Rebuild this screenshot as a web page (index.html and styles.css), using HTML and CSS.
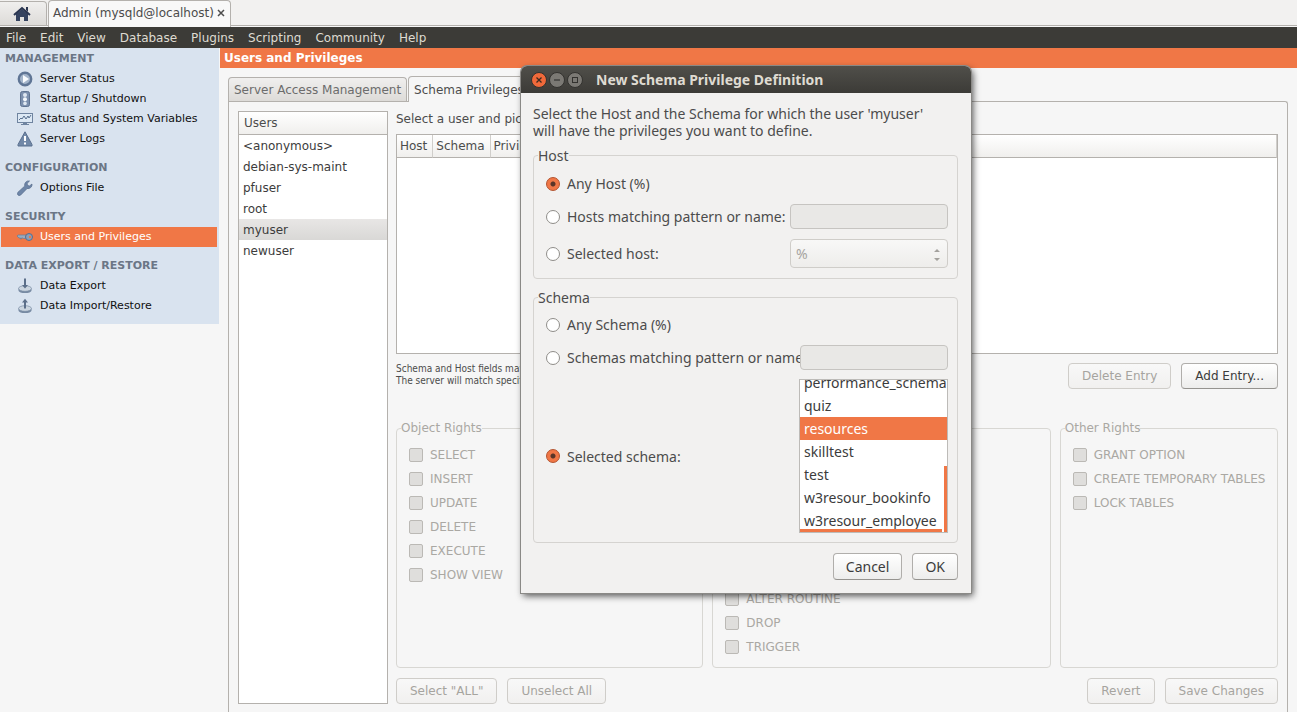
FILE: index.html
```html
<!DOCTYPE html>
<html lang="en">
<head>
<meta charset="utf-8">
<title>Admin (mysqld@localhost)</title>
<link rel="stylesheet" href="styles.css">
</head>
<body>
<div class="app">
  <div class="topbar">
    <button class="home" type="button" aria-label="Home">
      <svg width="18" height="16" viewBox="0 0 18 16"><path d="M3 8v7h4v-4h4v4h4V8L9 3z" fill="#34425f"/><path d="M1 9l8-7 8 7" fill="none" stroke="#2a3550" stroke-width="2"/><path d="M13 1h2v5l-2-2z" fill="#2a3550"/></svg>
    </button>
    <div class="doctab"><span>Admin (mysqld@localhost)</span><button type="button" class="close" aria-label="Close tab"><svg width="10" height="10" viewBox="0 0 10 10"><path d="M2 2l6 6M8 2L2 8" stroke="#4c4c4c" stroke-width="1.5"/></svg></button></div>
  </div>
  <nav class="menu">
    <button type="button">File</button><button type="button">Edit</button><button type="button">View</button><button type="button">Database</button><button type="button">Plugins</button><button type="button">Scripting</button><button type="button">Community</button><button type="button">Help</button>
  </nav>
  <div class="main">
    <aside class="side">
      <h2>MANAGEMENT</h2>
      <a href="#"><svg width="16" height="16" viewBox="0 0 16 16"><circle cx="8" cy="8" r="6.200" fill="#a3b4ca" stroke="#5f7595" stroke-width="2.400"/><path d="M6 4l6 4-6 4z" fill="#f8fbfe"/></svg>Server Status</a>
      <a href="#"><svg width="16" height="16" viewBox="0 0 16 16"><rect x="3.500" y=".5" width="9" height="15" rx="2" fill="#7c90ae" stroke="#5f7391"/><circle cx="8" cy="4" r="2" fill="#dfe8f1"/><circle cx="8" cy="8.200" r="2" fill="#f4f8fc"/><circle cx="8" cy="12.400" r="1.800" fill="#dfe8f1"/></svg>Startup / Shutdown</a>
      <a href="#"><svg width="16" height="16" viewBox="0 0 16 16"><rect x=".5" y="2.500" width="15" height="9" fill="#dce8f4" stroke="#6f84a0"/><path d="M2 9l2-2 1 1 2-3 2 3 2-3 1 2 2-3" fill="none" stroke="#58708f"/><path d="M6 12h4v1h2v1H4v-1h2z" fill="#6f84a0"/></svg>Status and System Variables</a>
      <a href="#"><svg width="16" height="16" viewBox="0 0 16 16"><path d="M8 .8L15 13.500v1.500H1v-1.500z" fill="#7289a8" stroke="#5b708f"/><path d="M7 5h2v5H7zM7 11.500h2v2H7z" fill="#fff"/></svg>Server Logs</a>
      <h2>CONFIGURATION</h2>
      <a href="#"><svg width="16" height="16" viewBox="0 0 16 16"><path d="M12.500 1a4 4 0 0 0-4.700 5L1 12.200A1.800 1.800 0 0 0 3.700 15l6.400-6.500A4 4 0 0 0 15 4l-2.600 2-2-.7-.2-2z" fill="#6e86a8" stroke="#566b8b" stroke-width=".7"/></svg>Options File</a>
      <h2>SECURITY</h2>
      <a href="#" class="on"><svg width="16" height="16" viewBox="0 0 16 16"><path d="M0 7l1-1h8v3.500H6.500L6 9H4.500v1h-1V9H2z" fill="#9aabbf" stroke="#647b98" stroke-width=".7"/><circle cx="12" cy="8" r="3.500" fill="#8ca0b8" stroke="#566e90"/><circle cx="13" cy="8" r="1.200" fill="#f07746"/></svg>Users and Privileges</a>
      <h2>DATA EXPORT / RESTORE</h2>
      <a href="#"><svg width="16" height="16" viewBox="0 0 16 16"><path d="M1.500 10.500v2c0 3.400 13 3.400 13 0v-2" fill="#788ba3"/><ellipse cx="8" cy="10.500" rx="6.500" ry="2.800" fill="#cbd5df" stroke="#788ba3" stroke-width=".7"/><path d="M7 .5h2V7h2L8 10.500 5 7h2z" fill="#5c6f89"/></svg>Data Export</a>
      <a href="#"><svg width="16" height="16" viewBox="0 0 16 16"><path d="M1.500 10.500v2c0 3.400 13 3.400 13 0v-2" fill="#788ba3"/><ellipse cx="8" cy="10.500" rx="6.500" ry="2.800" fill="#cbd5df" stroke="#788ba3" stroke-width=".7"/><path d="M7 10.500h2V4.500h2L8 .8 5 4.500h2z" fill="#5c6f89"/></svg>Data Import/Restore</a>
    </aside>
    <main class="content">
      <h1>Users and Privileges</h1>
      <div class="notebook">
        <div class="tabs">
          <button type="button" class="tab">Server Access Management</button>
          <button type="button" class="tab active">Schema Privileges</button>
        </div>
        <div class="panel">
          <div class="users">
            <table>
              <thead><tr><th>Users</th></tr></thead>
              <tbody>
                <tr><td>&lt;anonymous&gt;</td></tr>
                <tr><td>debian-sys-maint</td></tr>
                <tr><td>pfuser</td></tr>
                <tr><td>root</td></tr>
                <tr class="sel"><td>myuser</td></tr>
                <tr><td>newuser</td></tr>
              </tbody>
            </table>
          </div>
          <div class="detail">
            <p class="intro">Select a user and pick</p>
            <div class="grid">
              <table><thead><tr><th>Host</th><th>Schema</th><th class="rest">Privileges</th></tr></thead></table>
            </div>
            <div class="entryrow">
              <p class="note">Schema and Host fields may<br>The server will match specific</p>
              <button type="button" class="btn" disabled>Delete Entry</button>
              <button type="button" class="btn">Add Entry...</button>
            </div>
            <div class="rights">
              <fieldset disabled><legend>Object Rights</legend>
                <label><input type="checkbox">SELECT</label>
                <label><input type="checkbox">INSERT</label>
                <label><input type="checkbox">UPDATE</label>
                <label><input type="checkbox">DELETE</label>
                <label><input type="checkbox">EXECUTE</label>
                <label><input type="checkbox">SHOW VIEW</label>
              </fieldset>
              <fieldset disabled><legend>DDL Rights</legend>
                <label><input type="checkbox">CREATE</label>
                <label><input type="checkbox">ALTER</label>
                <label><input type="checkbox">REFERENCES</label>
                <label><input type="checkbox">INDEX</label>
                <label><input type="checkbox">CREATE VIEW</label>
                <label><input type="checkbox">CREATE ROUTINE</label>
                <label><input type="checkbox">ALTER ROUTINE</label>
                <label><input type="checkbox">DROP</label>
                <label><input type="checkbox">TRIGGER</label>
              </fieldset>
              <fieldset disabled><legend>Other Rights</legend>
                <label><input type="checkbox">GRANT OPTION</label>
                <label><input type="checkbox">CREATE TEMPORARY TABLES</label>
                <label><input type="checkbox">LOCK TABLES</label>
              </fieldset>
            </div>
            <div class="actions">
              <button type="button" class="btn" disabled>Select "ALL"</button>
              <button type="button" class="btn" disabled>Unselect All</button>
              <span class="spacer"></span>
              <button type="button" class="btn" disabled>Revert</button>
              <button type="button" class="btn" disabled>Save Changes</button>
            </div>
          </div>
        </div>
      </div>
    </main>
  </div>
</div>

<div class="dialog" role="dialog" aria-labelledby="dlg-title">
  <div class="titlebar">
    <button type="button" class="wb wclose" aria-label="Close"><svg width="8" height="8" viewBox="0 0 8 8"><path d="M1.500 1.500l5 5M6.500 1.500l-5 5" stroke="#3c2a20" stroke-width="1.300"/></svg></button>
    <button type="button" class="wb" aria-label="Minimize"><svg width="8" height="8" viewBox="0 0 8 8"><path d="M1 4h6" stroke="#33322f" stroke-width="1.200"/></svg></button>
    <button type="button" class="wb" aria-label="Maximize"><svg width="8" height="8" viewBox="0 0 8 8"><rect x="1.500" y="1.500" width="5" height="5" fill="none" stroke="#33322f"/></svg></button>
    <h2 id="dlg-title">New Schema Privilege Definition</h2>
  </div>
  <div class="dbody">
    <p>Select the Host and the Schema for which the user 'myuser' will have the privileges you want to define.</p>
    <fieldset class="host"><legend>Host</legend>
      <div class="frow"><label><input type="radio" name="host" checked>Any Host (%)</label></div>
      <div class="frow"><label><input type="radio" name="host">Hosts matching pattern or name:</label><input class="field" type="text" aria-label="Host pattern" disabled></div>
      <div class="frow tall"><label><input type="radio" name="host">Selected host:</label>
        <span class="combo"><select aria-label="Host" disabled><option>%</option></select><svg width="8" height="14" viewBox="0 0 8 14"><path d="M1 4l3-3 3 3zM1 10h6l-3 3z" fill="#a3a19d"/></svg></span></div>
    </fieldset>
    <fieldset class="schema"><legend>Schema</legend>
      <div class="frow"><label><input type="radio" name="schema">Any Schema (%)</label></div>
      <div class="frow"><label><input type="radio" name="schema">Schemas matching pattern or name:</label><input class="field" type="text" aria-label="Schema pattern" disabled></div>
      <div class="frow list"><label><input type="radio" name="schema" checked>Selected schema:</label>
        <div class="lbox"><ul role="listbox" aria-label="Schemas">
          <li role="option">performance_schema</li>
          <li role="option">quiz</li>
          <li role="option" aria-selected="true" class="pick">resources</li>
          <li role="option">skilltest</li>
          <li role="option">test</li>
          <li role="option">w3resour_bookinfo</li>
          <li role="option">w3resour_employee</li>
        </ul><span class="vbar"></span><span class="hbar"></span></div></div>
    </fieldset>
    <div class="dactions"><button type="button" class="btn">Cancel</button><button type="button" class="btn">OK</button></div>
  </div>
</div>
</body>
</html>
```

FILE: styles.css
```css
* { box-sizing: border-box; }
body { margin: 0; background: #f6f6f6; color: #4c4c4c; font: 12px/16px "DejaVu Sans", sans-serif; }
button, input, select { font: inherit; color: inherit; }
h1, h2, p, ul { margin: 0; padding: 0; }
ul { list-style: none; }
fieldset { margin: 0; min-width: 0; }
table { border-collapse: separate; border-spacing: 0; width: 100%; }
.app { display: flex; flex-direction: column; min-height: 100vh; }

.topbar { display: flex; align-items: flex-end; height: 27px; background: #f2f1f0; box-shadow: inset 0 -1px #f8f8f8, inset 0 -2px #b4b1ad; }
.home { width: 47px; height: 25px; margin-bottom: 1px; padding: 4px 2px 0 0; border: 1px solid #b4b1ad; border-left: 0; border-radius: 0 4px 0 0; background: linear-gradient(#f0efee, #dddbd8); }
.doctab { display: flex; align-items: center; gap: 2px; height: 27px; margin-left: 1px; padding: 0 4px 2px; border: solid #b4b1ad; border-width: 1px 1px 0; border-radius: 4px 4px 0 0; background: #f8f8f8; }
.close { display: flex; padding: 0; border: 0; background: none; }

.menu { display: flex; gap: 14px; height: 21px; padding: 0 6px; background: #3c3b37; color: #dfdbd2; }
.menu button { padding: 0; border: 0; background: none; }

.main { display: flex; flex: 1; }
.side { align-self: flex-start; width: 219px; padding: 3px 2px 8px 1px; background: #d9e3ef; font-size: 11px; }
.side h2 { padding: 0 4px; font: bold 11px/16px "DejaVu Sans", sans-serif; color: #6b7686; }
.side a + h2 { margin-top: 11px; }
.side a { display: flex; align-items: center; gap: 7px; height: 20px; padding-left: 16px; color: #101010; text-decoration: none; }
.side h2 { height: 18px; }
.side a.on { background: #f07746; color: #fff; }

.content { display: flex; flex-direction: column; flex: 1; min-width: 0; }
h1 { margin-left: 1px; padding: 2px 4px; background: #f07746; color: #fff; font: bold 12px/16px "DejaVu Sans", sans-serif; }
.notebook { display: flex; flex-direction: column; flex: 1; padding: 8px 9px 0; }
.tabs { display: flex; align-items: flex-end; gap: 1px; }
.tab { height: 24px; padding: 0 5px; border: 1px solid #b4b1ad; border-bottom: 0; border-radius: 4px 4px 0 0; background: linear-gradient(#f0efee, #dddbd8); color: #6c6c6c; }
.tab.active { height: 26px; background: #f6f6f6; color: #4c4c4c; margin-bottom: -1px; z-index: 1; }
.panel { display: flex; gap: 8px; flex: 1; padding: 9px 9px 8px; border: solid #b4b1ad; border-width: 1px 1px 0; border-radius: 0 3px 0 0; }

.users { width: 150px; border: 1px solid #b4b1ad; background: #fff; }
th { height: 23px; padding: 0 5px; border-bottom: 1px solid #b4b1ad; background: linear-gradient(#fff, #f0efed); font-weight: normal; text-align: left; }
td { height: 21px; padding: 0 4px; color: #3c3c3c; }
.sel td { background: linear-gradient(#e8e6e5, #d9d8d6); }

.detail { display: flex; flex-direction: column; flex: 1; min-width: 0; }
.grid { flex: 1; min-height: 100px; margin: 7px 0 9px; border: 1px solid #b4b1ad; background: #fff; }
.grid th { padding: 0 5px 0 3px; border-right: 1px solid #d0cecb; }
.grid .rest { width: 100%; }
.entryrow { display: flex; gap: 10px; margin-bottom: 31px; }
.note { flex: 1; font: 10px/12px "DejaVu Sans Condensed", "DejaVu Sans", sans-serif; }
.btn { height: 26px; padding: 0 12px; border: 1px solid #b0aeab; border-bottom-color: #95938f; border-radius: 4px; background: linear-gradient(#fff, #ededec); color: #3c3c3c; }
.entryrow .btn, .actions .btn { padding: 0 13px; }
.btn:disabled { border-color: #cfcdc9; background: linear-gradient(#f8f8f8, #f1f0ef); color: #a6a49f; }

.rights { display: grid; grid-template-columns: 307fr 338fr 218fr; gap: 9px; }
.rights fieldset { padding: 7px 8px 8px 12px; border: 1px solid #d8d7d3; border-radius: 4px; color: #aaa8a3; }
.rights legend { margin-left: -8px; padding: 0; }
.rights label { display: flex; align-items: center; gap: 7px; height: 24px; white-space: nowrap; }
input[type="checkbox"] { appearance: none; flex: none; width: 14px; height: 14px; margin: 0; border: 1px solid #bbb9b5; border-radius: 2px; background: #dfdedc; }
.actions { display: flex; gap: 10px; margin-top: 10px; }
.spacer { flex: 1; }

.dialog { position: absolute; z-index: 5; top: 66px; left: 521px; width: 450px; border-radius: 6px 6px 0 0; background: #f2f1f0; box-shadow: 0 0 0 1px #8a8986, 2px 3px 7px #000a; font: 14px/17px "Noto Sans", sans-serif; color: #4c4c4c; }
.titlebar { display: flex; align-items: center; gap: 2px; height: 27px; padding-left: 10px; border-radius: 6px 6px 0 0; background: linear-gradient(#504f4a, #3c3b37); color: #dfdbd2; }
.titlebar h2 { margin-left: 11px; font: bold 14px/17px "Noto Sans", sans-serif; }
.wb { display: flex; align-items: center; justify-content: center; width: 16px; height: 16px; padding: 0; border: 1px solid #33322f; border-radius: 50%; background: #7b7974; }
.wclose { background: #f0693a; }
.dbody { padding: 12px 13px 13px 12px; }
.dbody p { margin-bottom: 8px; padding-right: 24px; }
.dbody fieldset { padding: 11px 9px 4px 12px; border: 1px solid #d5d3d0; border-radius: 4px; }
.dbody legend { margin-left: -8px; padding: 0; height: 17px; }
.frow { display: flex; align-items: center; justify-content: space-between; height: 33px; }
.frow label { display: flex; align-items: center; gap: 7px; flex: 1; min-width: 0; padding: 3px 0; overflow: hidden; white-space: nowrap; }
.frow:first-of-type { height: 17px; margin-bottom: 8px; }
.frow.tall { height: 41px; }
input[type="radio"] { appearance: none; flex: none; width: 14px; height: 14px; margin: 0; border: 1px solid #8f8d89; border-radius: 50%; background: #fff; }
input[type="radio"]:checked { border-color: #b4512c; background: radial-gradient(circle, #5a3528 0 2px, #f07746 3px); }
.field { width: 158px; height: 25px; border: 1px solid #c6c4c1; border-radius: 4px; background: #e9e8e6; }
.schema .field { width: 148px; }
.combo { position: relative; width: 158px; height: 29px; }
.combo select { appearance: none; width: 100%; height: 100%; padding: 0 5px; border: 1px solid #cfcdc9; border-radius: 4px; background: linear-gradient(#f8f8f7, #eeedeb); color: #a6a49f; opacity: 1; }
.combo svg { position: absolute; right: 7px; top: 9px; }
.dbody .schema { margin-top: 10px; padding-top: 10px; }
.frow.list { height: 164px; }
.lbox { position: relative; display: flex; align-items: flex-end; width: 149px; height: 154px; border: 1px solid #bdbbb8; background: #fff; color: #3c3c3c; overflow: hidden; }
.lbox ul { width: 100%; }
.lbox li { height: 23px; padding: 3px 4px; white-space: nowrap; }
.lbox .pick { background: #f07746; color: #fff; }
.vbar { position: absolute; right: 0; bottom: 0; width: 3px; height: 66px; background: #f07746; }
.hbar { position: absolute; left: 0; bottom: 0; width: 142px; height: 3px; background: #f07746; }
.dactions { display: flex; justify-content: flex-end; gap: 10px; margin-top: 10px; }
.dactions .btn { height: 27px; }
```
